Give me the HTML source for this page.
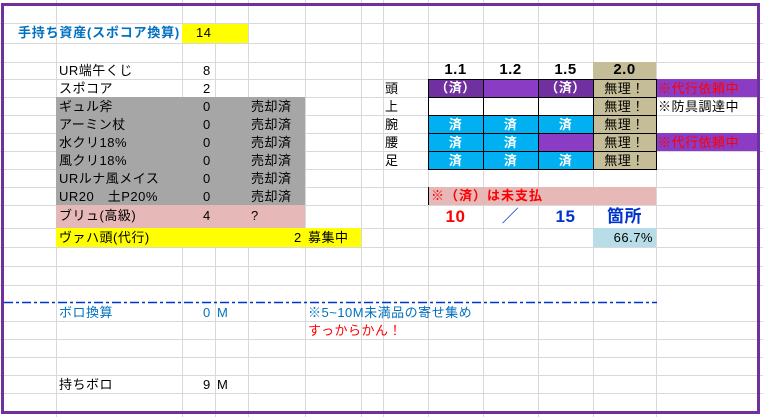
<!DOCTYPE html>
<html><head><meta charset="utf-8"><style>
*{margin:0;padding:0;box-sizing:border-box}
body{width:763px;height:417px;background:#fff;position:relative;overflow:hidden;font-family:"Liberation Sans","Noto Sans CJK JP",sans-serif;font-size:13px;color:#000;letter-spacing:0.5px}
.a{position:absolute}
.h{position:absolute;left:0;width:763px;height:1px;background:#d9d9d9}
.v{position:absolute;top:0;height:417px;width:1px;background:#d9d9d9}
.c{position:absolute;line-height:18px;white-space:nowrap}
.ce{text-align:center}
.r{text-align:right}
</style></head><body>
<div class="h" style="top:23px"></div><div class="h" style="top:43px"></div><div class="h" style="top:62px"></div><div class="h" style="top:79px"></div><div class="h" style="top:97px"></div><div class="h" style="top:115px"></div><div class="h" style="top:133px"></div><div class="h" style="top:151px"></div><div class="h" style="top:169px"></div><div class="h" style="top:187px"></div><div class="h" style="top:205px"></div><div class="h" style="top:228px"></div><div class="h" style="top:247px"></div><div class="h" style="top:266px"></div><div class="h" style="top:285px"></div><div class="h" style="top:321px"></div><div class="h" style="top:339px"></div><div class="h" style="top:357px"></div><div class="h" style="top:375px"></div><div class="h" style="top:393px"></div>
<div class="v" style="left:56px"></div><div class="v" style="left:182px"></div><div class="v" style="left:215px"></div><div class="v" style="left:248px"></div><div class="v" style="left:305px"></div><div class="v" style="left:361px"></div><div class="v" style="left:383px"></div><div class="v" style="left:428px"></div><div class="v" style="left:483px"></div><div class="v" style="left:538px"></div><div class="v" style="left:593px"></div><div class="v" style="left:656px"></div>

<div class="c" style="left:18px;top:24px;color:#0070c0;font-weight:bold;letter-spacing:0.8px">手持ち資産(スポコア換算)</div>
<div class="a" style="left:182px;top:24px;width:66px;height:19px;background:#ffff00"></div>
<div class="c" style="left:196px;top:24px">14</div>

<div class="a" style="left:56px;top:97px;width:249px;height:108px;background:#a6a6a6"></div>
<div class="a" style="left:56px;top:205px;width:249px;height:23px;background:#e6b8b7"></div>
<div class="a" style="left:56px;top:228px;width:305px;height:19px;background:#ffff00"></div>
<div class="c" style="left:59px;top:62px">UR端午くじ</div><div class="c" style="left:203px;top:62px">8</div>
<div class="c" style="left:59px;top:80px">スポコア</div><div class="c" style="left:203px;top:80px">2</div>
<div class="c" style="left:59px;top:98px">ギュル斧</div><div class="c" style="left:203px;top:98px">0</div><div class="c" style="left:251px;top:98px">売却済</div>
<div class="c" style="left:59px;top:116px">アーミン杖</div><div class="c" style="left:203px;top:116px">0</div><div class="c" style="left:251px;top:116px">売却済</div>
<div class="c" style="left:59px;top:134px">水クリ18%</div><div class="c" style="left:203px;top:134px">0</div><div class="c" style="left:251px;top:134px">売却済</div>
<div class="c" style="left:59px;top:152px">風クリ18%</div><div class="c" style="left:203px;top:152px">0</div><div class="c" style="left:251px;top:152px">売却済</div>
<div class="c" style="left:59px;top:170px">URルナ風メイス</div><div class="c" style="left:203px;top:170px">0</div><div class="c" style="left:251px;top:170px">売却済</div>
<div class="c" style="left:59px;top:188px">UR20　土P20%</div><div class="c" style="left:203px;top:188px">0</div><div class="c" style="left:251px;top:188px">売却済</div>
<div class="c" style="left:59px;top:207px">ブリュ(高級)</div><div class="c" style="left:203px;top:207px">4</div><div class="c" style="left:251px;top:207px">?</div>
<div class="c" style="left:59px;top:229px">ヴァハ頭(代行)</div><div class="c" style="left:294px;top:229px">2</div><div class="c" style="left:308px;top:229px">募集中</div>

<div class="a" style="left:593px;top:62px;width:63px;height:17px;background:#c4bd97"></div>
<div class="c ce" style="left:428px;top:61px;width:55px;font-weight:bold;font-size:15px">1.1</div>
<div class="c ce" style="left:483px;top:61px;width:55px;font-weight:bold;font-size:15px">1.2</div>
<div class="c ce" style="left:538px;top:61px;width:55px;font-weight:bold;font-size:15px">1.5</div>
<div class="c ce" style="left:593px;top:61px;width:63px;font-weight:bold;font-size:15px">2.0</div>
<div class="c" style="left:385px;top:80px">頭</div><div class="c" style="left:385px;top:98px">上</div><div class="c" style="left:385px;top:116px">腕</div><div class="c" style="left:385px;top:134px">腰</div><div class="c" style="left:385px;top:152px">足</div>

<div class="a" style="left:428px;top:79px;width:55px;height:18px;background:#7030a0"></div>
<div class="a" style="left:483px;top:79px;width:55px;height:18px;background:#8b3cc4"></div>
<div class="a" style="left:538px;top:79px;width:55px;height:18px;background:#7030a0"></div>
<div class="a" style="left:428px;top:97px;width:165px;height:18px;background:#fff"></div>
<div class="a" style="left:428px;top:115px;width:165px;height:18px;background:#00b0f0"></div>
<div class="a" style="left:428px;top:133px;width:110px;height:18px;background:#00b0f0"></div>
<div class="a" style="left:538px;top:133px;width:55px;height:18px;background:#8b3cc4"></div>
<div class="a" style="left:428px;top:151px;width:165px;height:18px;background:#00b0f0"></div>
<div class="a" style="left:593px;top:79px;width:63px;height:90px;background:#c4bd97"></div>
<div class="a" style="left:656px;top:79px;width:101px;height:18px;background:#8b3cc4"></div>
<div class="a" style="left:656px;top:133px;width:101px;height:18px;background:#8b3cc4"></div>
<div class="a" style="left:428px;top:79px;width:229px;height:91px;border:1px solid #000"></div>
<div class="a" style="left:428px;top:97px;width:229px;height:1px;background:#000"></div>
<div class="a" style="left:428px;top:115px;width:229px;height:1px;background:#000"></div>
<div class="a" style="left:428px;top:133px;width:229px;height:1px;background:#000"></div>
<div class="a" style="left:428px;top:151px;width:229px;height:1px;background:#000"></div>
<div class="a" style="left:483px;top:79px;width:1px;height:90px;background:#000"></div>
<div class="a" style="left:538px;top:79px;width:1px;height:90px;background:#000"></div>
<div class="a" style="left:593px;top:79px;width:1px;height:90px;background:#000"></div>

<div class="c ce" style="left:428px;top:79px;width:55px;color:#fff;font-weight:bold">（済）</div>
<div class="c ce" style="left:538px;top:79px;width:55px;color:#fff;font-weight:bold">（済）</div>
<div class="c ce" style="left:428px;top:116px;width:55px;color:#fff;font-weight:bold">済</div>
<div class="c ce" style="left:483px;top:116px;width:55px;color:#fff;font-weight:bold">済</div>
<div class="c ce" style="left:538px;top:116px;width:55px;color:#fff;font-weight:bold">済</div>
<div class="c ce" style="left:428px;top:134px;width:55px;color:#fff;font-weight:bold">済</div>
<div class="c ce" style="left:483px;top:134px;width:55px;color:#fff;font-weight:bold">済</div>
<div class="c ce" style="left:428px;top:152px;width:55px;color:#fff;font-weight:bold">済</div>
<div class="c ce" style="left:483px;top:152px;width:55px;color:#fff;font-weight:bold">済</div>
<div class="c ce" style="left:538px;top:152px;width:55px;color:#fff;font-weight:bold">済</div>
<div class="c ce" style="left:593px;top:80px;width:63px">無理！</div>
<div class="c ce" style="left:593px;top:98px;width:63px">無理！</div>
<div class="c ce" style="left:593px;top:116px;width:63px">無理！</div>
<div class="c ce" style="left:593px;top:134px;width:63px">無理！</div>
<div class="c ce" style="left:593px;top:152px;width:63px">無理！</div>
<div class="c" style="left:658px;top:80px;color:#ff0000">※代行依頼中</div>
<div class="c" style="left:658px;top:98px">※防具調達中</div>
<div class="c" style="left:658px;top:134px;color:#ff0000">※代行依頼中</div>

<div class="a" style="left:428px;top:187px;width:228px;height:18px;background:#e6b8b7;border-left:1px solid #000"></div>
<div class="c" style="left:431px;top:187px;color:#ff0000;font-weight:bold;letter-spacing:1px">※（済）は未支払</div>
<div class="c ce" style="left:428px;top:206px;width:55px;line-height:22px;color:#ff0000;font-weight:bold;font-size:17px">10</div>
<div class="c ce" style="left:483px;top:206px;width:55px;line-height:22px;color:#0033cc;font-size:17px">／</div>
<div class="c ce" style="left:538px;top:206px;width:55px;line-height:22px;color:#0033cc;font-weight:bold;font-size:17px">15</div>
<div class="c ce" style="left:593px;top:206px;width:63px;line-height:22px;color:#0033cc;font-weight:bold;font-size:17px">箇所</div>
<div class="a" style="left:593px;top:228px;width:63px;height:19px;background:#b7dee8"></div>
<div class="c r" style="left:593px;top:229px;width:60px">66.7%</div>

<svg class="a" style="left:4px;top:301px" width="653" height="3"><line x1="0" y1="1.5" x2="653" y2="1.5" stroke="#0033cc" stroke-width="1.5" stroke-dasharray="9,3,3,3"/></svg>

<div class="c" style="left:59px;top:304px;color:#0070c0">ボロ換算</div>
<div class="c" style="left:203px;top:304px;color:#0070c0">0</div><div class="c" style="left:217px;top:304px;color:#0070c0">M</div>
<div class="c" style="left:308px;top:304px;color:#0070c0">※5~10M未満品の寄せ集め</div>
<div class="c" style="left:308px;top:322px;color:#ff0000">すっからかん！</div>
<div class="c" style="left:59px;top:376px">持ちボロ</div>
<div class="c" style="left:203px;top:376px">9</div><div class="c" style="left:217px;top:376px">M</div>

<div class="a" style="left:1px;top:3px;width:759px;height:411px;border:3px solid #7030a0"></div>
</body></html>
